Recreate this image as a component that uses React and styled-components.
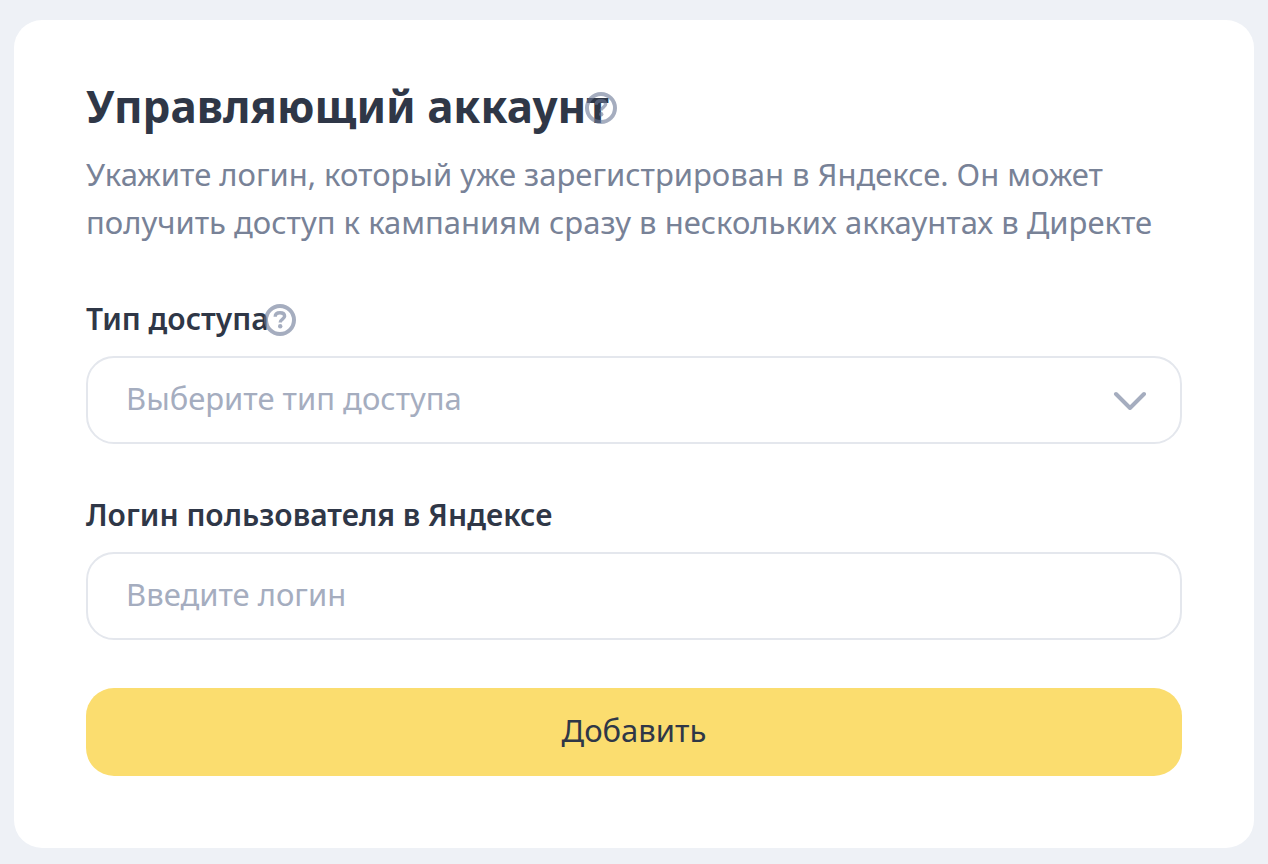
import React from "react";
import styled, { createGlobalStyle } from "styled-components";

const GlobalStyle = createGlobalStyle`
  *, *::before, *::after { box-sizing: border-box; }
  body {
    margin: 0;
    background: #eef1f6;
    font-family: "Noto Sans", "Open Sans", sans-serif;
    color: #2f3747;
  }
  button, input, select { font: inherit; }
`;

const Page = styled.main`
  padding: 20px 14px 16px;
`;

const Card = styled.form`
  display: flex;
  flex-direction: column;
  padding: 60px 72px 72px;
  border-radius: 28px;
  background: #fff;
`;

const Heading = styled.div`
  display: flex;
  align-items: center;
`;

const Title = styled.h1`
  margin: 0;
  padding-bottom: 4px;
  font-size: 44px;
  line-height: 52px;
  font-weight: 700;
  white-space: nowrap;
`;

const Description = styled.p`
  margin: 14px 0 0;
  font-size: 31px;
  line-height: 48px;
  color: #788297;
`;

const Field = styled.div`
  display: flex;
  flex-direction: column;
  gap: 16px;
  margin-top: 52px;

  ${Description} + & {
    margin-top: 54px;
  }
`;

const LabelRow = styled.div`
  display: flex;
  align-items: center;
`;

const Label = styled.label`
  padding-bottom: 2px;
  font-size: 30px;
  line-height: 38px;
  font-weight: 600;
  white-space: nowrap;
`;

const HelpButton = styled.button`
  display: flex;
  flex: none;
  margin: 0 0 0 -${(p) => p.$overlap}px;
  padding: 0;
  border: 0;
  background: none;
  color: #6b7896;
  opacity: 0.6;
  cursor: pointer;
`;

const controlStyles = `
  width: 100%;
  height: 88px;
  padding: 0 38px 4px;
  border: 2px solid #e4e7ed;
  border-radius: 28px;
  background: #fff;
  font-size: 31px;
  outline: none;
`;

const Input = styled.input`
  && { ${controlStyles} }
  color: #2f3747;
  &::placeholder { color: #a5adbf; opacity: 1; }
`;

const SelectBox = styled.div`
  display: grid;
  align-items: center;
  > * { grid-area: 1 / 1; }
`;

const Select = styled.select`
  && { ${controlStyles} }
  appearance: none;
  color: #a5adbf;
`;

const Chevron = styled.svg`
  justify-self: end;
  margin-right: 34px;
  pointer-events: none;
`;

const SubmitButton = styled.button`
  height: 88px;
  margin-top: 48px;
  padding: 0 38px 4px;
  border: 0;
  border-radius: 28px;
  background: #fbdd6f;
  color: #2f3747;
  font-size: 31px;
  cursor: pointer;
`;

function Help({ label, overlap }) {
  return (
    <HelpButton type="button" aria-label={label} $overlap={overlap}>
      <svg width="32" height="32" viewBox="0 0 32 32" fill="none" stroke="currentColor">
        <circle cx="16" cy="16" r="14" strokeWidth="4" />
        <path d="M11.2 12.8C11.2 10.1 13.2 8.7 16 8.7C18.8 8.7 20.6 10.1 20.6 12.3C20.6 15.2 16.2 15.1 16.2 18.6" strokeWidth="3.4" />
        <circle cx="16.2" cy="22.2" r="2.2" fill="currentColor" stroke="none" />
      </svg>
    </HelpButton>
  );
}

export default function App() {
  return (
    <Page>
      <GlobalStyle />
      <Card onSubmit={(e) => e.preventDefault()}>
        <Heading>
          <Title>Управляющий аккаунт</Title>
          <Help label="Об управляющем аккаунте" overlap={24} />
        </Heading>
        <Description>
          Укажите логин, который уже зарегистрирован в Яндексе. Он может
          получить доступ к кампаниям сразу в нескольких аккаунтах в Директе
        </Description>
        <Field>
          <LabelRow>
            <Label htmlFor="access">Тип доступа</Label>
            <Help label="О типах доступа" overlap={5} />
          </LabelRow>
          <SelectBox>
            <Select id="access" defaultValue="">
              <option value="">Выберите тип доступа</option>
            </Select>
            <Chevron width="36" height="20" viewBox="0 0 36 20" fill="none" stroke="#a5adbf" strokeWidth="4" strokeLinecap="round" strokeLinejoin="round">
              <path d="M4 4L18 18L32 4" />
            </Chevron>
          </SelectBox>
        </Field>
        <Field>
          <LabelRow>
            <Label htmlFor="login">Логин пользователя в Яндексе</Label>
          </LabelRow>
          <Input id="login" type="text" placeholder="Введите логин" />
        </Field>
        <SubmitButton type="submit">Добавить</SubmitButton>
      </Card>
    </Page>
  );
}
